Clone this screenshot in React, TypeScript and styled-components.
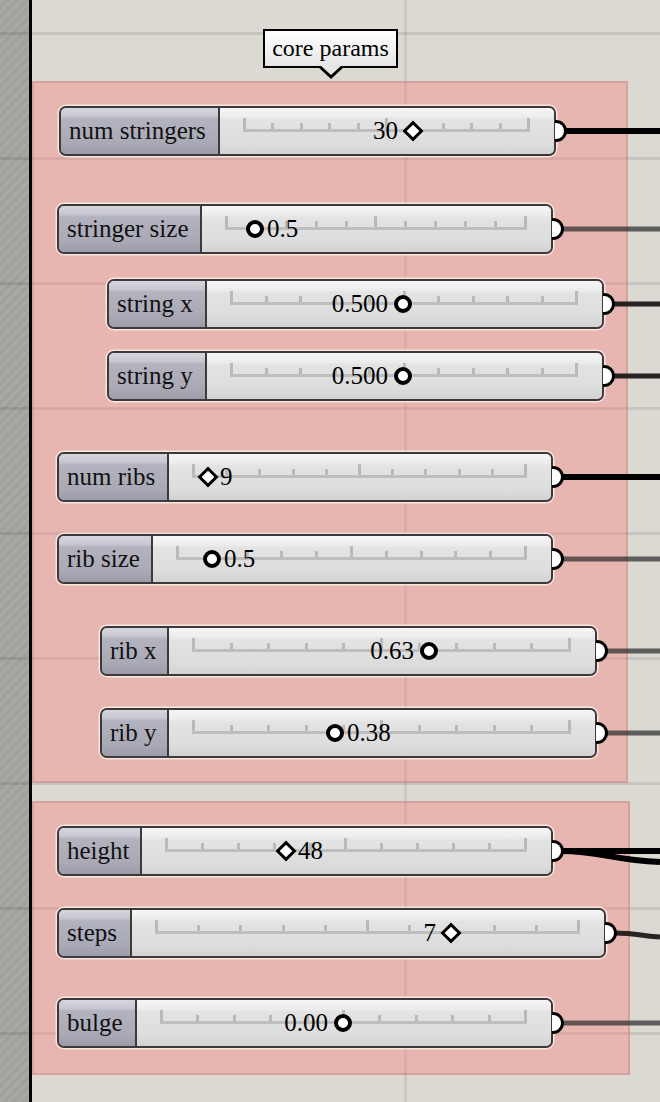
import { createGlobalStyle, styled } from "styled-components"

const GlobalStyle = createGlobalStyle`
  html, body {
    margin: 0;
    padding: 0;
  }
  body {
    width: 660px;
    height: 1102px;
    overflow: hidden;
    background: #dcd9d3;
    font-family: "Liberation Serif", "Times New Roman", serif;
  }
`

// canvas starts right after the rail + divider
const CANVAS_X = 32

type Marker = "diamond" | "circle"
type Wire = "black" | "dark" | "gray"

type SliderSpec = {
  label: string
  x: number
  y: number
  w: number
  labelW: number
  value: string
  marker: Marker
  at: number
  side: "left" | "right"
  wire: Wire
}

type GroupSpec = {
  top: number
  width: number
  height: number
  sliders: SliderSpec[]
}

// positions are page coordinates measured off the canvas
const groups: GroupSpec[] = [
  {
    top: 81,
    width: 596,
    height: 702,
    sliders: [
      { label: "num stringers", x: 59, y: 106, w: 497, labelW: 161, value: "30", marker: "diamond", at: 415, side: "left", wire: "black" },
      { label: "stringer size", x: 57, y: 204, w: 496, labelW: 145, value: "0.5", marker: "circle", at: 257, side: "right", wire: "gray" },
      { label: "string x", x: 107, y: 279, w: 497, labelW: 100, value: "0.500", marker: "circle", at: 405, side: "left", wire: "dark" },
      { label: "string y", x: 107, y: 351, w: 497, labelW: 100, value: "0.500", marker: "circle", at: 405, side: "left", wire: "dark" },
      { label: "num ribs", x: 57, y: 452, w: 496, labelW: 112, value: "9", marker: "diamond", at: 210, side: "right", wire: "black" },
      { label: "rib size", x: 57, y: 534, w: 496, labelW: 96, value: "0.5", marker: "circle", at: 214, side: "right", wire: "gray" },
      { label: "rib x", x: 100, y: 626, w: 497, labelW: 69, value: "0.63", marker: "circle", at: 431, side: "left", wire: "gray" },
      { label: "rib y", x: 100, y: 708, w: 497, labelW: 69, value: "0.38", marker: "circle", at: 337, side: "right", wire: "gray" },
    ],
  },
  {
    top: 801,
    width: 598,
    height: 274,
    sliders: [
      { label: "height", x: 57, y: 826, w: 496, labelW: 85, value: "48", marker: "diamond", at: 288, side: "right", wire: "black" },
      { label: "steps", x: 57, y: 908, w: 549, labelW: 75, value: "7", marker: "diamond", at: 453, side: "left", wire: "dark" },
      { label: "bulge", x: 57, y: 998, w: 496, labelW: 80, value: "0.00", marker: "circle", at: 345, side: "left", wire: "gray" },
    ],
  },
]

const allSliders = groups.flatMap((g) => g.sliders)

const wireStyle: Record<Wire, { color: string; width: number }> = {
  black: { color: "#000", width: 6 },
  dark: { color: "rgba(25, 20, 20, 0.92)", width: 5 },
  gray: { color: "rgba(45, 45, 45, 0.72)", width: 5 },
}

const TICKS = 11
const GROUP_BORDER = 2

export default function App() {
  return (
    <>
      <GlobalStyle />
      <Page>
        <Rail />
        <Divider />
        <Canvas>
          <Wires width={628} height={1102} viewBox="0 0 628 1102">
            {allSliders.map((s) => {
              const x0 = s.x + s.w + 8 - CANVAS_X
              const y0 = s.y + 25
              const { color, width } = wireStyle[s.wire]
              if (s.label === "height") {
                return (
                  <g key={s.label} stroke={color} strokeWidth={width} fill="none">
                    <path d={`M${x0} ${y0} L628 ${y0}`} />
                    <path d={`M${x0} ${y0} C${x0 + 40} ${y0} ${x0 + 50} ${y0 + 9} 628 ${y0 + 11}`} />
                  </g>
                )
              }
              if (s.label === "steps") {
                return (
                  <path
                    key={s.label}
                    d={`M${x0} ${y0} C${x0 + 20} ${y0} ${x0 + 30} ${y0 + 3} 628 ${y0 + 4}`}
                    stroke={color}
                    strokeWidth={width}
                    fill="none"
                  />
                )
              }
              return (
                <path
                  key={s.label}
                  d={`M${x0} ${y0} L628 ${y0}`}
                  stroke={color}
                  strokeWidth={width}
                  fill="none"
                />
              )
            })}
          </Wires>

          {groups.map((g) => (
            <Group key={g.top} $width={g.width} $height={g.height}>
              {g.sliders.map((s) => (
                <Slider key={s.label} spec={s} groupTop={g.top} />
              ))}
            </Group>
          ))}

          <Tooltip>core params</Tooltip>
        </Canvas>
      </Page>
    </>
  )
}

function Slider({ spec, groupTop }: { spec: SliderSpec; groupTop: number }) {
  const bodyLeft = spec.x + spec.labelW
  return (
    <Node
      $x={spec.x - CANVAS_X - GROUP_BORDER}
      $y={spec.y - groupTop - GROUP_BORDER}
      $w={spec.w}
    >
      <Label $width={spec.labelW}>{spec.label}</Label>
      <Body>
        <Track>
          {Array.from({ length: TICKS }, (_, i) => (
            <Tick key={i} $tall={i === 0 || i === TICKS - 1 || i === (TICKS - 1) / 2} />
          ))}
        </Track>
        <Anchor style={{ left: spec.at - bodyLeft - 2 }}>
          {spec.marker === "diamond" ? <Diamond /> : <Ring />}
          <Value $side={spec.side}>{spec.value}</Value>
        </Anchor>
      </Body>
      <Grip />
    </Node>
  )
}

const gridLines = `
  linear-gradient(to bottom, rgba(0, 0, 0, 0.09) 3px, transparent 3px)
`

const Page = styled.div`
  display: flex;
  width: 660px;
  height: 1102px;
  overflow: hidden;
`

const Rail = styled.div`
  width: 29px;
  flex-shrink: 0;
  background:
    ${gridLines} 0 32px / 100% 125px,
    repeating-linear-gradient(
      135deg,
      rgba(255, 255, 255, 0.08) 0 3px,
      transparent 3px 7px
    ),
    #a3a19d;
`

const Divider = styled.div`
  width: 3px;
  flex-shrink: 0;
  background: #000;
`

const Canvas = styled.div`
  position: relative;
  flex: 1;
  height: 100%;
  display: flex;
  flex-direction: column;
  align-items: flex-start;
  gap: 18px;
  padding-top: 81px;
  box-sizing: border-box;
  background:
    linear-gradient(to right, rgba(0, 0, 0, 0.08) 3px, transparent 3px) 372px 0 / 3px 100% no-repeat,
    ${gridLines} 0 32px / 100% 125px,
    #dcd9d3;
`

const Group = styled.div<{ $width: number; $height: number }>`
  position: relative;
  flex-shrink: 0;
  width: ${({ $width }) => $width}px;
  height: ${({ $height }) => $height}px;
  box-sizing: border-box;
  background: rgba(255, 117, 114, 0.35);
  border: ${GROUP_BORDER}px solid rgba(140, 95, 90, 0.22);
`

const Wires = styled.svg`
  position: absolute;
  left: 0;
  top: 0;
  z-index: 1;
  pointer-events: none;
`

const Node = styled.div<{ $x: number; $y: number; $w: number }>`
  position: absolute;
  z-index: 2;
  left: ${({ $x }) => $x}px;
  top: ${({ $y }) => $y}px;
  width: ${({ $w }) => $w}px;
  height: 50px;
  box-sizing: border-box;
  display: flex;
  border: 2px solid #3a3a3a;
  border-radius: 7px;
  box-shadow: 0 0 0 1.5px rgba(255, 244, 240, 0.75);
`

const Label = styled.div<{ $width: number }>`
  width: ${({ $width }) => $width - 2}px;
  flex-shrink: 0;
  box-sizing: border-box;
  display: flex;
  align-items: center;
  padding-left: 8px;
  border-right: 2px solid #3a3a3a;
  border-radius: 5px 0 0 5px;
  background: linear-gradient(
    to bottom,
    #d6d6de 0,
    #c7c7d1 18%,
    #b3b3bf 24%,
    #aaaab6 75%,
    #9c9ca8 100%
  );
  font-size: 25px;
  color: #111;
  white-space: nowrap;
  overflow: hidden;
`

const Body = styled.div`
  position: relative;
  flex: 1;
  padding: 10px 24px 0 23px;
  border-radius: 0 5px 5px 0;
  background: linear-gradient(
    to bottom,
    #f6f6f6 0,
    #ececec 20%,
    #e3e3e3 26%,
    #dcdcdc 80%,
    #d2d2d2 100%
  );
`

const Track = styled.div`
  display: flex;
  align-items: flex-end;
  justify-content: space-between;
  height: 14px;
  box-sizing: border-box;
  border-bottom: 3px solid #bebebe;
`

const Tick = styled.span<{ $tall: boolean }>`
  width: 3px;
  height: ${({ $tall }) => ($tall ? 11 : 6)}px;
  background: #b9b9b9;
`

const Anchor = styled.div`
  position: absolute;
  top: 23px;
  width: 0;
  height: 0;
`

const Diamond = styled.span`
  position: absolute;
  left: 0;
  top: 0;
  width: 9px;
  height: 9px;
  background: #fff;
  border: 3px solid #000;
  transform: translate(-50%, -50%) rotate(45deg);
`

const Ring = styled.span`
  position: absolute;
  left: 0;
  top: 0;
  width: 10px;
  height: 10px;
  background: #fff;
  border: 4px solid #000;
  border-radius: 50%;
  transform: translate(-50%, -50%);
`

const Value = styled.span<{ $side: "left" | "right" }>`
  position: absolute;
  top: -15px;
  ${({ $side }) => ($side === "left" ? "right: 15px;" : "left: 12px;")}
  font-size: 25px;
  line-height: 30px;
  color: #000;
  white-space: nowrap;
`

const Grip = styled.span`
  position: absolute;
  right: -13px;
  top: 50%;
  width: 9px;
  height: 16px;
  transform: translateY(-50%);
  background: #fff;
  border: 3px solid #000;
  border-left: none;
  border-radius: 0 11px 11px 0;
`

const Tooltip = styled.div`
  position: absolute;
  left: ${263 - CANVAS_X}px;
  top: 29px;
  width: 135px;
  height: 39px;
  box-sizing: border-box;
  display: flex;
  align-items: center;
  justify-content: center;
  border: 2px solid #000;
  background: linear-gradient(to bottom, #ffffff, #e6e6e6);
  font-size: 24px;
  color: #000;
  z-index: 3;

  &::before,
  &::after {
    content: "";
    position: absolute;
    left: 50%;
    width: 0;
    height: 0;
    transform: translateX(-50%);
  }

  &::before {
    top: 100%;
    border-left: 14px solid transparent;
    border-right: 14px solid transparent;
    border-top: 13px solid #000;
  }

  &::after {
    top: calc(100% - 1px);
    border-left: 11px solid transparent;
    border-right: 11px solid transparent;
    border-top: 10px solid #e6e6e6;
  }
`
